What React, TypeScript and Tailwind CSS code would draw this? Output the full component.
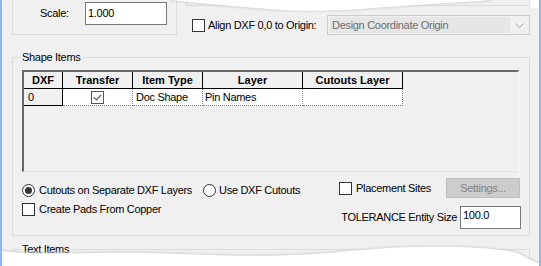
import React from "react";

function CheckBox({ checked = false, dim = false }: { checked?: boolean; dim?: boolean }) {
	return (
		<span
			className={`w-[13px] h-[13px] shrink-0 bg-white border flex items-center justify-center ${
				dim ? "border-[#555555]" : "border-[#333333]"
			}`}
		>
			{checked && (
				<svg width="9" height="7" viewBox="0 0 9 7">
					<path d="M0.8 3.2 L3.4 5.8 L8.2 0.8" stroke="#5a5a5a" strokeWidth="1.2" fill="none" />
				</svg>
			)}
		</span>
	);
}

function Radio({ on = false }: { on?: boolean }) {
	return (
		<span className="w-[13px] h-[13px] shrink-0 rounded-full bg-white border border-[#333333] flex items-center justify-center">
			{on && <span className="w-[7px] h-[7px] rounded-full bg-[#333333]" />}
		</span>
	);
}

function Legend({ text }: { text: string }) {
	return (
		<span className="absolute -top-[7px] left-[7px] px-[2px] bg-[#f0f0f0] leading-[13px]">
			{text}
		</span>
	);
}

const headers = [
	{ label: "DXF", w: "w-[39px]" },
	{ label: "Transfer", w: "w-[70px]" },
	{ label: "Item Type", w: "w-[70px]" },
	{ label: "Layer", w: "w-[100px]" },
	{ label: "Cutouts Layer", w: "w-[100px]" },
];

export default function App() {
	return (
		<div className="relative w-[541px] h-[266px] overflow-hidden bg-[#f0f0f0] border-l-2 border-r-2 border-[#8ab8ec] font-['Liberation_Sans',Arial,sans-serif] text-[11px] leading-[13px] tracking-[-0.3px] text-black">
			{/* top row */}
			<div className="flex items-start h-[35px]">
				<div className="ml-[10px] -mt-[10px] w-[165px] h-[45px] border border-[#dcdcdc] pt-[11px]">
					<div className="flex items-center h-[23px]">
						<span className="w-[72px] pl-[27px]">Scale:</span>
						<div className="w-[82px] h-[23px] bg-white border border-[#7a7a7a] px-[2px] flex items-center">
							1.000
						</div>
					</div>
				</div>
				<div className="ml-[9px] w-[344px] -mt-[10px] flex flex-col">
					<div className="h-[16px] border-x border-b border-[#dcdcdc]" />
					<div className="mt-[9px] h-[20px] flex items-center">
						<span className="ml-[6px]">
							<CheckBox />
						</span>
						<span className="ml-[3px]">Align DXF 0,0 to Origin:</span>
						<div className="ml-auto w-[203px] h-[20px] border border-[#cccccc] bg-[#f0f0f0] flex items-center">
							<div className="ml-[2px] w-[180px] h-[16px] bg-[#e6e6e6] text-[#6d6d6d] pl-[2px] flex items-center">
								Design Coordinate Origin
							</div>
							<svg className="ml-auto mr-[5px]" width="9" height="5" viewBox="0 0 9 5">
								<path d="M0.5 0.5 L4.5 4.5 L8.5 0.5" stroke="#a8a8a8" fill="none" />
							</svg>
						</div>
					</div>
				</div>
			</div>

			{/* Shape Items */}
			<div className="relative ml-[10px] mt-[22px] w-[518px] h-[179px] border border-[#dcdcdc]">
				<Legend text="Shape Items" />
				<div className="ml-[9px] mt-[12px] w-[497px] h-[102px] border-t-2 border-l-2 border-[#696969] border-r border-b border-r-[#fafafa] border-b-[#e3e3e3] bg-[#f0f0f0]">
					<div className="flex h-[17px]">
						{headers.map((h) => (
							<div
								key={h.label}
								className={`${h.w} border-r border-b border-black flex items-center justify-center font-bold tracking-normal`}
							>
								{h.label}
							</div>
						))}
					</div>
					<div className="flex h-[17px]">
						<div className="w-[39px] border-r border-b border-black pl-[4px] flex items-center">0</div>
						<div className="w-[70px] bg-white border-r border-b border-dotted border-[#808080] flex items-center justify-center">
							<CheckBox checked dim />
						</div>
						<div className="w-[70px] bg-white border-r border-b border-dotted border-[#808080] pl-[3px] flex items-center">
							Doc Shape
						</div>
						<div className="w-[100px] bg-white border-r border-b border-dotted border-[#808080] pl-[2px] flex items-center">
							Pin Names
						</div>
						<div className="w-[100px] bg-white border-r border-b border-dotted border-[#808080]" />
					</div>
				</div>

				<div className="flex justify-between">
					<div className="ml-[9px] mt-[8px] flex flex-col">
						<div className="h-[20px] flex items-center">
							<Radio on />
							<span className="ml-[4px]">Cutouts on Separate DXF Layers</span>
							<span className="ml-[11px]">
								<Radio />
							</span>
							<span className="ml-[3px]">Use DXF Cutouts</span>
						</div>
						<div className="h-[19px] flex items-center">
							<CheckBox />
							<span className="ml-[4px]">Create Pads From Copper</span>
						</div>
					</div>
					<div className="mt-[6px] flex flex-col items-end">
						<div className="mr-[9px] h-[20px] flex items-center">
							<CheckBox />
							<span className="ml-[4px]">Placement Sites</span>
							<div className="ml-[15px] w-[74px] h-[20px] bg-[#cccccc] border border-[#bfbfbf] text-[#838383] flex items-center justify-center">
								Settings...
							</div>
						</div>
						<div className="mr-[8px] mt-[8px] h-[23px] flex items-center">
							<span>TOLERANCE Entity Size</span>
							<div className="ml-[3px] w-[61px] h-[23px] bg-white border border-[#7a7a7a] pl-[2px] pt-[2px]">
								100.0
							</div>
						</div>
					</div>
				</div>
			</div>

			{/* Text Items */}
			<div className="relative ml-[10px] mt-[13px] w-[518px] h-[40px] border border-[#dcdcdc]">
				<Legend text="Text Items" />
			</div>

			{/* torn paper edges */}
			<svg
				className="absolute -left-[2px] top-0 pointer-events-none"
				width="541"
				height="266"
				viewBox="0 0 541 266"
			>
				<defs>
					<filter id="soft">
						<feGaussianBlur stdDeviation="1" />
					</filter>
				</defs>
				<path
					d="M170 0 C200 3 230 6 270 9 C300 12 330 11 360 9 C400 6 440 3 480 1 L490 0"
					stroke="#cfcfcf"
					strokeWidth="2"
					fill="none"
					filter="url(#soft)"
				/>
				<path
					d="M170 0 C200 3 230 6 270 9 C300 12 330 11 360 9 C400 6 440 3 480 1 L490 0 Z"
					fill="#ffffff"
				/>
				<rect x="0" y="0" width="3" height="8" fill="#ffffff" />
				<rect x="530" y="0" width="11" height="8" fill="#ffffff" />
				<path
					d="M0 251 C20 254 60 254 100 253 C140 252 170 254 210 255 C250 257 290 256 330 253 C360 250 390 247 420 247 C460 246 490 248 515 252 C525 256 532 262 541 264"
					stroke="#cfcfcf"
					strokeWidth="2"
					fill="none"
					filter="url(#soft)"
				/>
				<path
					d="M0 251 C20 254 60 254 100 253 C140 252 170 254 210 255 C250 257 290 256 330 253 C360 250 390 247 420 247 C460 246 490 248 515 252 C525 256 532 262 541 264 L541 266 L0 266 Z"
					fill="#ffffff"
				/>
			</svg>
		</div>
	);
}
